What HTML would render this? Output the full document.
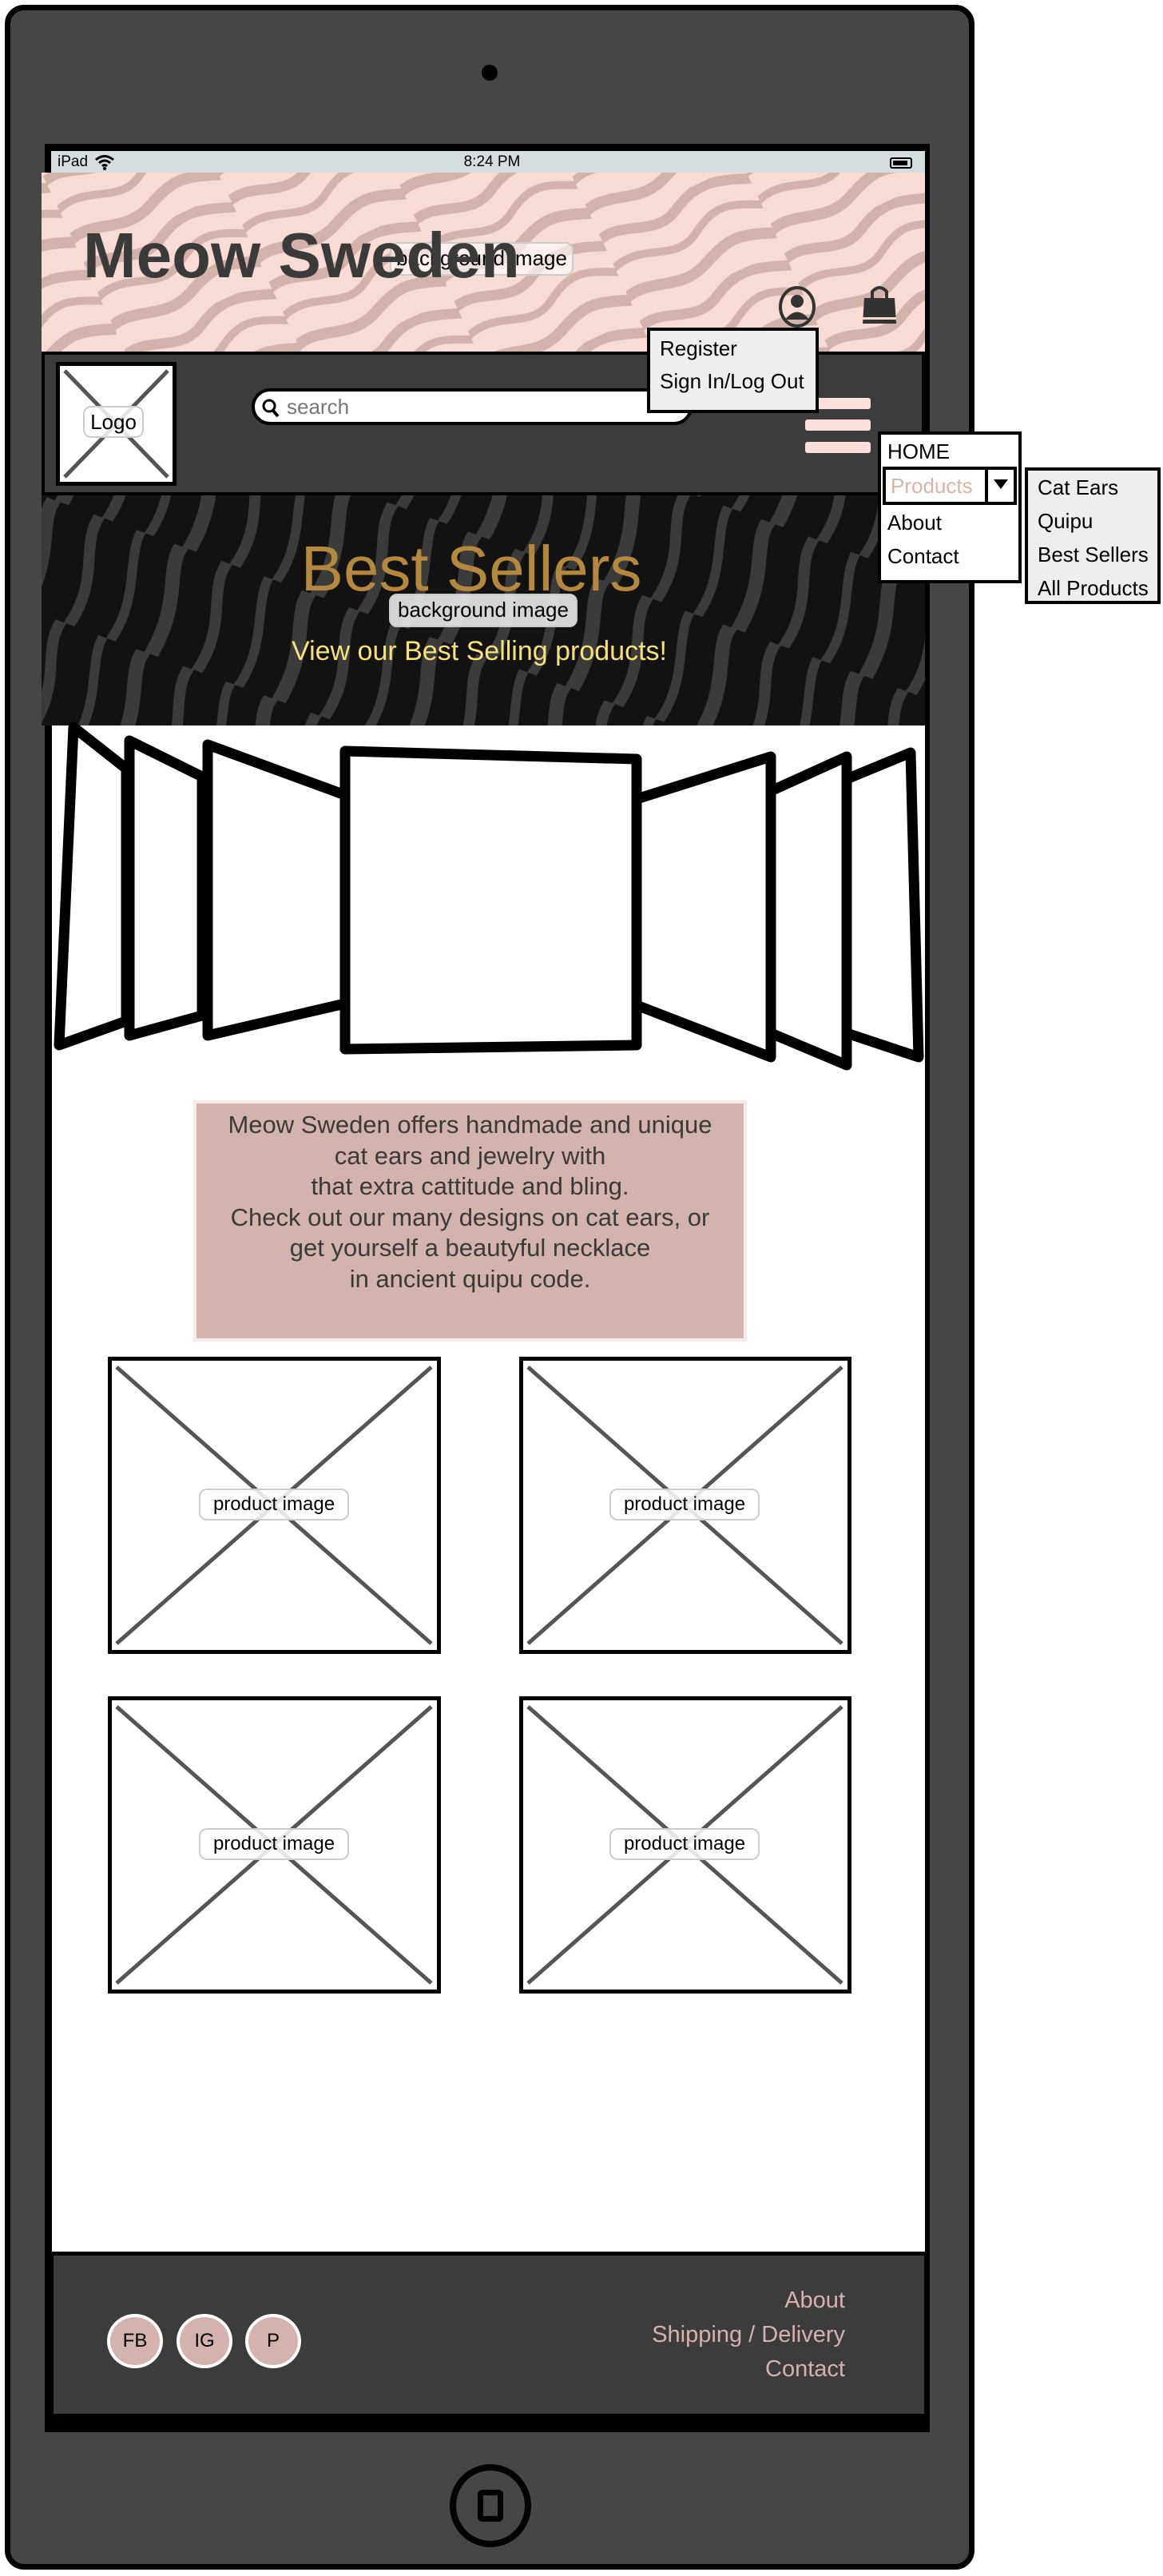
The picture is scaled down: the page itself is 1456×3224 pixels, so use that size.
<!DOCTYPE html>
<html><head><meta charset="utf-8">
<style>
*{margin:0;padding:0;box-sizing:border-box}
html,body{width:1456px;height:3224px;background:#fff;overflow:hidden;font-family:"Liberation Sans",sans-serif}
.abs{position:absolute}
.lbl{position:absolute;background:rgba(255,255,255,.85);border:2px solid #ccc;border-radius:10px;color:#000;text-align:center;font-size:24px;line-height:36px}
.ph{position:absolute;background:#fff;border:5px solid #000}
.ph svg{position:absolute;left:0;top:0;width:100%;height:100%}
</style></head><body>
<div class="abs" style="left:6px;top:6px;width:1214px;height:3210px;background:#464646;border:7px solid #000;border-radius:24px"></div>
<div class="abs" style="left:603px;top:81px;width:20px;height:20px;border-radius:50%;background:#000"></div>
<div class="abs" style="left:56px;top:180px;width:1108px;height:2864px;background:#000"></div>
<div class="abs" style="left:65px;top:440px;width:1093px;height:2390px;background:#fff"></div>
<div class="abs" style="left:64px;top:189px;width:1094px;height:28px;background:#d5dde0;font-size:19px;line-height:28px;color:#000">
 <span class="abs" style="left:8px">iPad</span>
 <svg class="abs" style="left:54px;top:4px" width="26" height="20" viewBox="0 0 26 20"><path d="M2 7 Q13 -2 24 7 M6 11 Q13 5 20 11 M10 15 Q13 12 16 15" stroke="#000" stroke-width="3" fill="none"/><circle cx="13" cy="18" r="2"/></svg>
 <span class="abs" style="left:512px;width:80px;text-align:center">8:24 PM</span>
 <div class="abs" style="left:1050px;top:8px;width:28px;height:14px;border:2px solid #000;border-radius:3px"><div style="margin:2px;width:18px;height:6px;background:#000"></div></div>
</div>
<svg class="abs" style="left:52px;top:216px" width="1106" height="224">
<defs><pattern id="zp" width="200" height="120" patternUnits="userSpaceOnUse" patternTransform="rotate(-25)">
<rect width="200" height="120" fill="#f7dbd4"/>
<path d="M-10 15 C30 -5 60 40 100 18 S160 5 210 25" stroke="#d4b2ac" stroke-width="13" fill="none"/>
<path d="M-10 55 C40 30 70 80 110 55 S165 40 210 62" stroke="#d4b2ac" stroke-width="10" fill="none"/>
<path d="M-10 95 C30 75 60 115 105 95 S160 80 210 100" stroke="#d4b2ac" stroke-width="14" fill="none"/>
</pattern></defs>
<rect width="1106" height="224" fill="url(#zp)"/>
</svg>
<div class="lbl" style="left:488px;top:303px;width:230px;height:42px;background:rgba(255,255,255,.6);font-size:26px">background image</div>
<div class="abs" style="left:104px;top:274px;font-size:80px;font-weight:bold;color:#3a3a3a;white-space:nowrap">Meow Sweden</div>
<svg class="abs" style="left:973px;top:357px" width="50" height="54" viewBox="0 0 50 54"><ellipse cx="25" cy="27" rx="21" ry="24" fill="none" stroke="#333" stroke-width="4"/><circle cx="25" cy="20" r="8" fill="#333"/><path d="M10 43 Q25 24 40 43 Z" fill="#333"/></svg>
<svg class="abs" style="left:1076px;top:357px" width="50" height="52" viewBox="0 0 50 52"><path d="M16 16 V8 Q25 -2 34 8 V16" stroke="#333" stroke-width="4" fill="none"/><path d="M6 16 H44 L46 48 H4 Z" fill="#333"/><rect x="4" y="40" width="42" height="3" fill="#f7dbd4"/></svg>
<div class="abs" style="left:52px;top:440px;width:1106px;height:180px;background:#3c3c3c;border:4px solid #000"></div>
<div class="ph" style="left:70px;top:453px;width:151px;height:155px"><svg viewBox="0 0 141 145" preserveAspectRatio="none"><path d="M6 6 L135 139 M135 6 L6 139" stroke="#555" stroke-width="5"/></svg></div>
<div class="lbl" style="left:104px;top:508px;width:76px;height:40px;font-size:26px">Logo</div>
<div class="abs" style="left:315px;top:486px;width:552px;height:46px;background:#fff;border:4px solid #000;border-radius:23px;font-size:26px;color:#777;line-height:38px;padding-left:40px">search
<svg class="abs" style="left:8px;top:8px" width="24" height="26" viewBox="0 0 24 26"><circle cx="10" cy="10" r="7" stroke="#000" stroke-width="3" fill="none"/><path d="M15 16 L21 23" stroke="#000" stroke-width="4"/></svg></div>
<div class="abs" style="left:1008px;top:498px;width:82px;height:14px;background:#fde0dc;border-radius:3px"></div>
<div class="abs" style="left:1008px;top:525px;width:82px;height:14px;background:#fde0dc;border-radius:3px"></div>
<div class="abs" style="left:1008px;top:553px;width:82px;height:14px;background:#fde0dc;border-radius:3px"></div>
<div class="abs" style="left:810px;top:410px;width:215px;height:107px;background:#eee;border:4px solid #000;font-size:26px;color:#000;padding:2px 0 0 12px;line-height:41px">Register<br>Sign In/Log Out</div>
<svg class="abs" style="left:52px;top:620px" width="1106" height="288">
<defs><pattern id="zb" width="170" height="140" patternUnits="userSpaceOnUse" patternTransform="rotate(20)">
<rect width="170" height="140" fill="#121212"/>
<path d="M20 -10 C0 30 45 60 25 150" stroke="#3b3b3b" stroke-width="18" fill="none"/>
<path d="M80 -10 C60 40 110 70 85 150" stroke="#3b3b3b" stroke-width="14" fill="none"/>
<path d="M135 -10 C120 30 165 80 140 150" stroke="#3b3b3b" stroke-width="12" fill="none"/>
</pattern></defs>
<rect width="1106" height="288" fill="url(#zb)"/>
</svg>
<div class="abs" style="left:300px;top:666px;width:580px;text-align:center;font-size:80px;color:#b5883e">Best Sellers</div>
<div class="lbl" style="left:487px;top:743px;width:236px;height:42px;background:rgba(235,235,235,.9);font-size:26px">background image</div>
<div class="abs" style="left:250px;top:796px;width:700px;text-align:center;font-size:34px;color:#f5e27a">View our Best Selling products!</div>
<div class="abs" style="left:1099px;top:540px;width:180px;height:190px;background:#fff;border:4px solid #000;font-size:26px;color:#000;line-height:40px">
 <div class="abs" style="left:8px;top:1px">HOME</div>
 <div class="abs" style="left:2px;top:40px;width:168px;height:48px;border:4px solid #000;color:#d8b4ac;padding-left:6px">Products<div class="abs" style="right:0;top:-4px;width:36px;height:48px;border-left:4px solid #000;"><div style="margin:16px 0 0 7px;width:0;height:0;border-left:9px solid transparent;border-right:9px solid transparent;border-top:12px solid #000"></div></div></div>
 <div class="abs" style="left:8px;top:90px">About</div>
 <div class="abs" style="left:8px;top:132px">Contact</div>
</div>
<div class="abs" style="left:1283px;top:585px;width:170px;height:171px;background:#eee;border:4px solid #000;font-size:26px;color:#000;line-height:42px;padding:0 0 0 12px">Cat Ears<br>Quipu<br>Best Sellers<br>All Products</div>
<svg class="abs" style="left:0;top:0" width="1456" height="1400" fill="#fff" stroke="#000" stroke-width="13" stroke-linejoin="round">
<polygon points="92,910 158,962 158,1278 74,1308"/>
<polygon points="162,927 253,972 253,1271 162,1296"/>
<polygon points="260,932 432,995 432,1256 260,1296"/>
<polygon points="1060,975 1140,942 1150,1323 1060,1293"/>
<polygon points="965,990 1060,947 1060,1333 965,1293"/>
<polygon points="797,1000 965,947 965,1323 797,1258"/>
<polygon points="432,940 797,950 797,1308 432,1313"/>
</svg>
<div class="abs" style="left:242px;top:1377px;width:693px;height:302px;background:#d4b2ad;border:4px solid #f3ecea;color:#3a3a3a;font-size:31px;line-height:38.5px;text-align:center;padding-top:8px;white-space:nowrap">Meow Sweden offers handmade and unique<br>cat ears and jewelry with<br>that extra cattitude and bling.<br>Check out our many designs on cat ears, or<br>get yourself a beautyful necklace<br>in ancient quipu code.</div>
<div class="ph" style="left:135px;top:1698px;width:417px;height:372px"><svg viewBox="0 0 407 362" preserveAspectRatio="none"><path d="M6 8 L400 354 M400 8 L6 354" stroke="#555" stroke-width="5"/></svg></div>
<div class="ph" style="left:650px;top:1698px;width:416px;height:372px"><svg viewBox="0 0 407 362" preserveAspectRatio="none"><path d="M6 8 L400 354 M400 8 L6 354" stroke="#555" stroke-width="5"/></svg></div>
<div class="ph" style="left:135px;top:2123px;width:417px;height:372px"><svg viewBox="0 0 407 362" preserveAspectRatio="none"><path d="M6 8 L400 354 M400 8 L6 354" stroke="#555" stroke-width="5"/></svg></div>
<div class="ph" style="left:650px;top:2123px;width:416px;height:372px"><svg viewBox="0 0 407 362" preserveAspectRatio="none"><path d="M6 8 L400 354 M400 8 L6 354" stroke="#555" stroke-width="5"/></svg></div>
<div class="lbl" style="left:249px;top:1863px;width:188px;height:40px">product image</div>
<div class="lbl" style="left:763px;top:1863px;width:188px;height:40px">product image</div>
<div class="lbl" style="left:249px;top:2288px;width:188px;height:40px">product image</div>
<div class="lbl" style="left:763px;top:2288px;width:188px;height:40px">product image</div>
<div class="abs" style="left:62px;top:2818px;width:1100px;height:208px;background:#3c3c3c;border:5px solid #000"></div>
<div class="abs" style="left:134px;top:2896px;width:70px;height:68px;border-radius:50%;background:#d4b2ad;border:4px solid #fff;text-align:center;line-height:60px;font-size:24px">FB</div>
<div class="abs" style="left:221px;top:2896px;width:70px;height:68px;border-radius:50%;background:#d4b2ad;border:4px solid #fff;text-align:center;line-height:60px;font-size:24px">IG</div>
<div class="abs" style="left:307px;top:2896px;width:70px;height:68px;border-radius:50%;background:#d4b2ad;border:4px solid #fff;text-align:center;line-height:60px;font-size:24px">P</div>
<div class="abs" style="left:700px;top:2858px;width:358px;text-align:right;color:#d4b2ad;font-size:29px;line-height:43px">About<br>Shipping / Delivery<br>Contact</div>
<div class="abs" style="left:563px;top:3084px;width:102px;height:104px;border-radius:50%;border:8px solid #000"></div>
<div class="abs" style="left:598px;top:3116px;width:32px;height:40px;border-radius:6px;border:7px solid #000"></div>
</body></html>
